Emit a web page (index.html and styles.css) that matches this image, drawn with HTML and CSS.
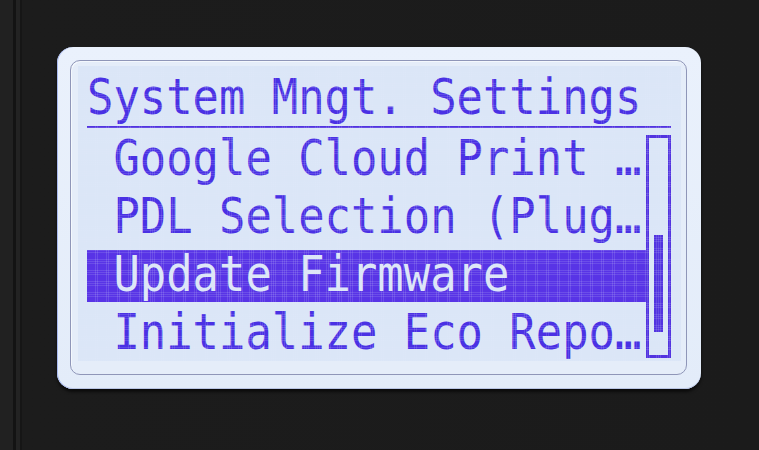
FILE: index.html
```html
<!DOCTYPE html>
<html>
<head>
    <title>System Mngt. Settings</title>
    <link rel="stylesheet" href="styles.css">
</head>
<body>
    <div class="bezel">
        <div class="panel">
            <div class="lcd">
                <div class="lcd-title"><span class="glyphs">System Mngt. Settings</span></div>
                <div class="lcd-body">
                    <ul class="menu">
                        <li class="menu-row"><span class="glyphs"> Google Cloud Print …</span></li>
                        <li class="menu-row"><span class="glyphs"> PDL Selection (Plug…</span></li>
                        <li class="menu-row selected"><span class="glyphs"> Update Firmware</span></li>
                        <li class="menu-row"><span class="glyphs"> Initialize Eco Repo…</span></li>
                    </ul>
                    <div class="scrollbar">
                        <div class="scroll-thumb"></div>
                    </div>
                </div>
            </div>
        </div>
    </div>
</body>
</html>
```

FILE: styles.css
```css
body {
    margin: 0;
    width: 759px;
    height: 450px;
    box-sizing: border-box;
    padding: 47px 0 0 57px;
    overflow: hidden;
    font-family: "DejaVu Sans Mono", "Liberation Mono", monospace;
    /* dark casing with the seam lines on the left */
    background:
        linear-gradient(to right,
            #212121 0, #212121 13px,
            #131313 13px, #131313 16px,
            #232323 16px, #232323 20px,
            #161616 20px, #161616 22px,
            #1c1c1c 22px, #1b1b1b 100%);
}

.bezel {
    width: 644px;
    height: 342px;
    box-sizing: border-box;
    padding: 13px 14px 14px 13px;
    border-radius: 16px;
    background: linear-gradient(#eaf1fc, #e3ecf9);
    box-shadow:
        inset 1px 0 0 #a9baf0,
        inset 0 -1px 0 #b9c5e4,
        0 3px 3px rgba(0, 0, 0, 0.6);
}

.panel {
    width: 617px;
    height: 315px;
    box-sizing: border-box;
    border: 1px solid #8f96b8;
    border-radius: 10px;
    background-color: #e5edf9;
    box-shadow: inset 1px 1px 0 #f4f8fd;
    padding: 5px 0 0 7px;
}

.lcd {
    position: relative;
    width: 603px;
    height: 295px;
    box-sizing: border-box;
    padding: 2px 10px 3px 9px;
    background-color: #dbe6f7;
    color: #4a31e4;
    font-size: 49.4px;
}

/* faint dot-matrix grid over the glass */
.lcd::after {
    content: "";
    position: absolute;
    inset: 0;
    pointer-events: none;
    background:
        repeating-linear-gradient(to right, transparent 0, transparent 1.7px, rgba(225, 232, 250, 0.14) 1.7px, rgba(225, 232, 250, 0.14) 2.2px),
        repeating-linear-gradient(to bottom, transparent 0, transparent 1.7px, rgba(225, 232, 250, 0.14) 1.7px, rgba(225, 232, 250, 0.14) 2.2px);
}

.glyphs {
    display: inline-block;
    white-space: pre;
    transform: scaleX(0.8877);
    transform-origin: 0 0;
}

.lcd-title {
    height: 58px;
    line-height: 58px;
    border-bottom: 2px solid #5233e0;
}

.lcd-body {
    display: flex;
}

.menu {
    list-style: none;
    margin: 1px 0 0 0;
    padding: 0;
    width: 559px;
}

.menu-row {
    height: 58px;
    line-height: 58px;
}

.menu-row.selected {
    color: #dde6f7;
    background: linear-gradient(#5834e6, #5834e6) 0 5px / 100% 52px no-repeat;
}

.scrollbar {
    margin-top: 7px;
    width: 25px;
    height: 223px;
    box-sizing: border-box;
    border: 3px solid #5233e0;
    padding: 97px 0 0 5px;
}

.scroll-thumb {
    width: 9px;
    height: 97px;
    background-color: #5233e0;
}
```
